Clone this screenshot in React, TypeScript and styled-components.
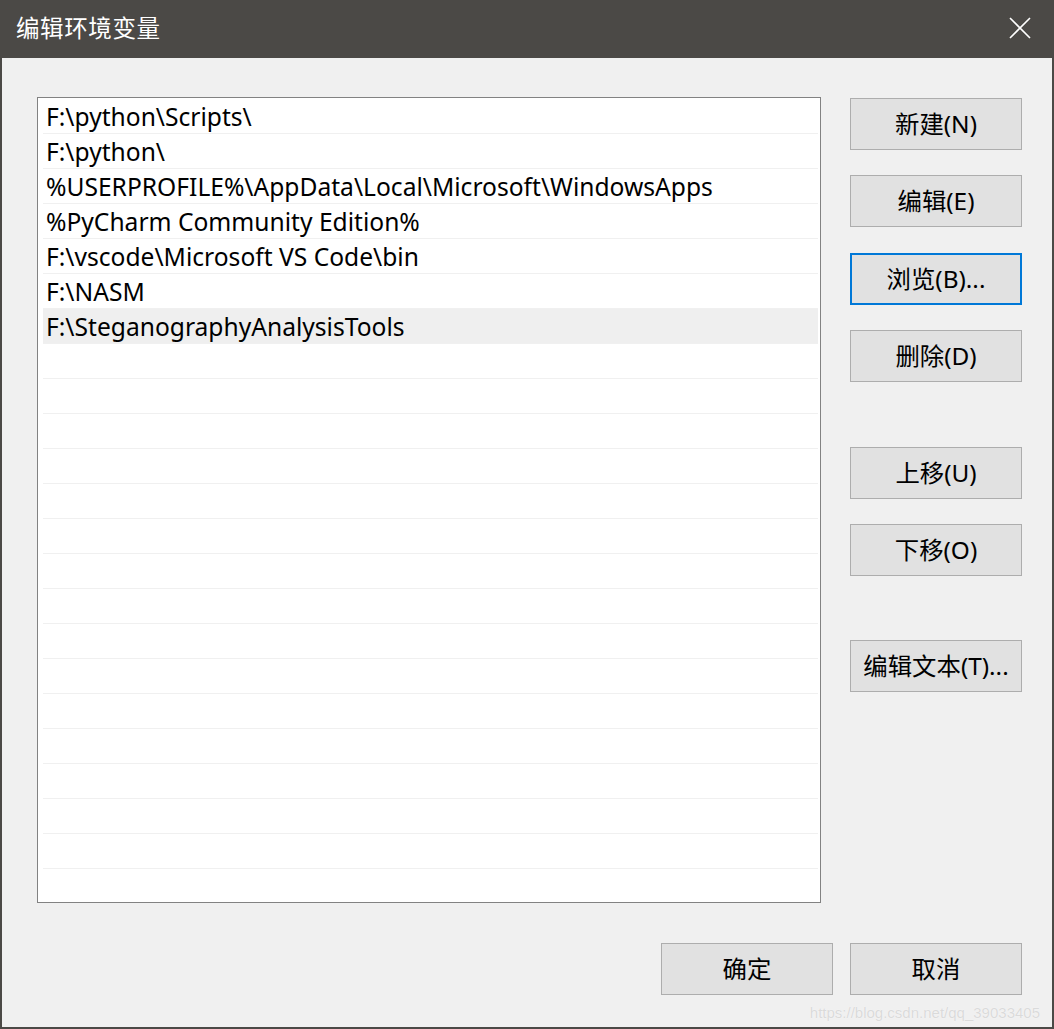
import React from 'react';
import styled, { createGlobalStyle } from 'styled-components';

const GlobalStyle = createGlobalStyle`
    html, body {
        margin: 0;
        padding: 0;
        background: #f0f0f0;
    }
    body {
        font-family: "Noto Sans", "Noto Sans CJK SC", sans-serif;
    }
`;

const Window = styled.div`
    position: relative;
    width: 1054px;
    height: 1029px;
    box-sizing: border-box;
    display: flex;
    flex-direction: column;
    background: #f0f0f0;
    border: 2px solid #4b4946;
    border-top: none;
    overflow: hidden;
`;

const TitleBar = styled.div`
    height: 58px;
    flex-shrink: 0;
    margin: 0 -2px;
    background: #4b4946;
    display: flex;
    align-items: center;
    justify-content: space-between;
    padding: 0 22px 0 16px;
`;

const Title = styled.span`
    color: #ffffff;
    font-family: "Noto Sans CJK SC", sans-serif;
    font-size: 23.5px;
    letter-spacing: 0.6px;
    line-height: 1;
    margin-top: -2px;
`;

const CloseButton = styled.div`
    width: 24px;
    height: 24px;
    display: flex;
    align-items: center;
    justify-content: center;
    margin-top: -2px;
`;

const Body = styled.div`
    flex: 1;
    display: flex;
    flex-direction: column;
    padding: 39px 30px 0 35px;
`;

const Main = styled.div`
    display: flex;
    gap: 29px;
`;

const ListBox = styled.div`
    width: 784px;
    height: 806px;
    box-sizing: border-box;
    border: 1px solid #828282;
    background: #ffffff;
    padding: 1px 2px 0 5px;
    display: flex;
    flex-direction: column;
    overflow: hidden;
`;

const Row = styled.div<{ $selected?: boolean }>`
    height: 35px;
    flex-shrink: 0;
    box-sizing: border-box;
    border-bottom: 1px solid #f0f0f0;
    background: ${(p) => (p.$selected ? '#efefef' : 'transparent')};
    display: flex;
    align-items: center;
    padding: 0 0 0 3px;
    font-family: "Noto Sans", sans-serif;
    font-size: 24.6px;
    color: #000000;
    white-space: nowrap;
`;

const SideButtons = styled.div`
    display: flex;
    flex-direction: column;
    width: 172px;
    padding-top: 1px;
`;

const Button = styled.button<{ $gap?: number; $focused?: boolean }>`
    width: 172px;
    height: 52px;
    flex-shrink: 0;
    margin-top: ${(p) => p.$gap ?? 0}px;
    box-sizing: border-box;
    background: #e1e1e1;
    border: ${(p) => (p.$focused ? '2px solid #0078d7' : '1px solid #adadad')};
    border-radius: 0;
    font-family: "Noto Sans", "Noto Sans CJK SC", sans-serif;
    font-size: 24.4px;
    color: #000000;
    padding: 0 0 4px;
    display: flex;
    align-items: center;
    justify-content: center;
    cursor: default;
`;

const Footer = styled.div`
    display: flex;
    justify-content: flex-end;
    gap: 17px;
    margin-top: 40px;
`;

const Watermark = styled.span`
    position: absolute;
    right: 12px;
    bottom: 6px;
    font-family: "Liberation Sans", sans-serif;
    font-size: 15px;
    color: #dadada;
    text-shadow: 0 0 1px #ffffff;
    pointer-events: none;
`;

const paths = [
    'F:\\python\\Scripts\\',
    'F:\\python\\',
    '%USERPROFILE%\\AppData\\Local\\Microsoft\\WindowsApps',
    '%PyCharm Community Edition%',
    'F:\\vscode\\Microsoft VS Code\\bin',
    'F:\\NASM',
    'F:\\SteganographyAnalysisTools',
];

const TOTAL_ROWS = 23;

const sideButtons = [
    { label: '新建(N)', gap: 0 },
    { label: '编辑(E)', gap: 25 },
    { label: '浏览(B)...', gap: 26, focused: true },
    { label: '删除(D)', gap: 25 },
    { label: '上移(U)', gap: 65 },
    { label: '下移(O)', gap: 25 },
    { label: '编辑文本(T)...', gap: 64 },
];

const App: React.FunctionComponent<{}> = () => {
    const rows = Array.from({ length: TOTAL_ROWS }, (_, i) => paths[i] ?? '');

    return (
        <>
            <GlobalStyle />
            <Window>
                <TitleBar>
                    <Title>编辑环境变量</Title>
                    <CloseButton>
                        <svg width="22" height="22" viewBox="0 0 22 22">
                            <path d="M1 1 L21 21 M21 1 L1 21" stroke="#ffffff" strokeWidth="1.6" />
                        </svg>
                    </CloseButton>
                </TitleBar>
                <Body>
                    <Main>
                        <ListBox>
                            {rows.map((text, i) => (
                                <Row key={i} $selected={i === paths.length - 1}>
                                    {text}
                                </Row>
                            ))}
                        </ListBox>
                        <SideButtons>
                            {sideButtons.map(({ label, gap, focused }) => (
                                <Button key={label} $gap={gap} $focused={focused}>
                                    {label}
                                </Button>
                            ))}
                        </SideButtons>
                    </Main>
                    <Footer>
                        <Button>确定</Button>
                        <Button>取消</Button>
                    </Footer>
                </Body>
                <Watermark>https://blog.csdn.net/qq_39033405</Watermark>
            </Window>
        </>
    );
};

export default App;
